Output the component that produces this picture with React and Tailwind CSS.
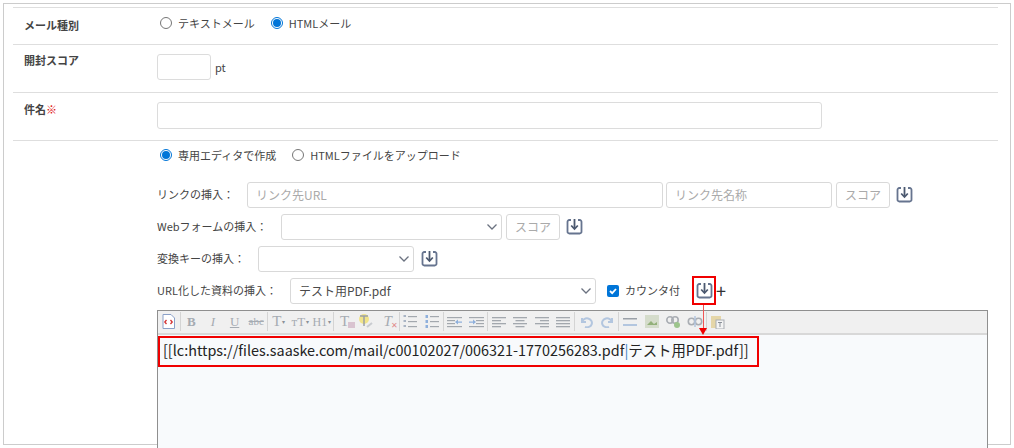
import React from 'react'

const font = { fontFamily: '"Noto Sans CJK JP", sans-serif' }

function InsertIcon() {
  return (
    <svg width="17" height="17" viewBox="0 0 17 17" fill="none" className="shrink-0">
      <path d="M5 2H3.500A1.800 1.800 0 0 0 1.500 4v9.500a1.800 1.800 0 0 0 2 2h10a1.800 1.800 0 0 0 2-2V4a1.800 1.800 0 0 0-2-2H12" stroke="#66748f" strokeWidth="1.800" />
      <path d="M8.500 1v9" stroke="#4b586f" strokeWidth="1.800" />
      <path d="M5.200 7.500l3.300 3.500 3.300-3.500" stroke="#4b586f" strokeWidth="1.800" />
    </svg>
  )
}

function Chevron() {
  return (
    <svg width="10" height="6" viewBox="0 0 10 6" fill="none" className="shrink-0">
      <path d="M.5 .5l4.500 4.500 4.500-4.500" stroke="#6b7280" strokeWidth="1.300" />
    </svg>
  )
}

function Radio({ checked, label }) {
  return (
    <label className="flex items-center gap-[6px]">
      {checked ? (
        <span className="flex h-[12px] w-[12px] items-center justify-center rounded-full border border-[#0075d8]">
          <span className="h-[8px] w-[8px] rounded-full bg-[#0075d8]" />
        </span>
      ) : (
        <span className="h-[12px] w-[12px] rounded-full border border-[#767676]" />
      )}
      <span>{label}</span>
    </label>
  )
}

function Select({ width, value }) {
  return (
    <div className={`flex h-[26px] items-center justify-between rounded-[3px] border border-[#d9d9d9] pl-2 pr-[4px] text-[12px] text-[#4a4a4a] ${width}`}>
      <span>{value}</span>
      <Chevron />
    </div>
  )
}

function ScoreButton() {
  return (
    <div className="flex h-[26px] w-[54px] items-center justify-center rounded-[3px] border border-[#d9d9d9] text-[12px] text-[#aaa]">
      スコア
    </div>
  )
}

function BulletList({ numbered }) {
  return (
    <svg width="14" height="13" viewBox="0 0 14 13">
      {[1, 6, 11].map((y) => (
        <g key={y}>
          <rect x="0.500" y={y - 1} width="2.500" height={numbered ? 3 : 2} fill={numbered ? '#8fb0dc' : '#a9b4c4'} />
          <rect x="5" y={y} width="9" height="1.200" fill="#a3a8ae" />
        </g>
      ))}
    </svg>
  )
}

function IndentIcon({ flip }) {
  return (
    <svg width="15" height="12" viewBox="0 0 15 12" style={flip ? { transform: 'scaleX(-1)' } : undefined}>
      {[1, 4, 7, 10].map((y) => (
        <rect key={y} x={y === 1 || y === 10 ? 0 : 7} y={y} width={y === 1 || y === 10 ? 15 : 8} height="1.200" fill="#a3a8ae" />
      ))}
      <path d="M0 5.500h4V3.500l3 2.500-3 2.500V6.800H0z" fill="#8fb0dc" />
    </svg>
  )
}

function AlignIcon({ align }) {
  const widths = [14, 9, 14, 9]
  return (
    <svg width="14" height="12" viewBox="0 0 14 12">
      {widths.map((w, i) => {
        const x = align === 'center' ? (14 - w) / 2 : align === 'right' ? 14 - w : 0
        return <rect key={i} x={align === 'justify' ? 0 : x} y={1 + i * 3} width={align === 'justify' ? 14 : w} height="1.300" fill="#a3a8ae" />
      })}
    </svg>
  )
}

const letter = 'font-["Liberation_Serif",serif] text-[#a5abb2]'
const caret = <span className="ml-[1px] text-[6px] text-[#8a9098]">▾</span>

const toolbar = [
  [<svg width="13" height="15" viewBox="0 0 13 15"><path d="M1 .5h8l3.500 3.500V14.500H1z" fill="#fff" stroke="#8aa0c8" /><path d="M4.500 6L2.800 8l1.700 2M8.500 6l1.700 2-1.700 2" stroke="#d43030" strokeWidth="1.300" fill="none" /></svg>],
  [
    <span className={`${letter} text-[13px] font-bold`}>B</span>,
    <span className={`${letter} text-[13px] italic`}>I</span>,
    <span className={`${letter} text-[13px] underline`}>U</span>,
    <span className={`${letter} text-[11px] line-through`}>abc</span>,
  ],
  [
    <span className={`${letter} flex items-center text-[15px]`}>T{caret}</span>,
    <span className={`${letter} flex items-center text-[13px]`}>тT{caret}</span>,
    <span className={`${letter} flex items-center text-[12px]`}>H1{caret}</span>,
  ],
  [
    <span className={`${letter} relative text-[15px]`}>T<span className="absolute bottom-[1px] left-[8px] h-[6px] w-[7px] bg-[#d9c3d0]" /></span>,
    <svg width="16" height="15" viewBox="0 0 16 15"><circle cx="6" cy="5" r="5" fill="#f1e48a" /><path d="M2 2h8M6 2v10" stroke="#9aa0a8" strokeWidth="1.500" /><path d="M9 13l5-4" stroke="#c9ccd0" strokeWidth="2" /></svg>,
    <span className={`${letter} relative text-[15px] italic`}>T<span className="absolute bottom-[-1px] left-[7px] text-[8px] not-italic text-[#e08a8a]">✕</span></span>,
  ],
  [<BulletList />, <BulletList numbered />],
  [<IndentIcon flip />, <IndentIcon />],
  [<AlignIcon align="left" />, <AlignIcon align="center" />, <AlignIcon align="right" />, <AlignIcon align="justify" />],
  [
    <svg width="14" height="12" viewBox="0 0 14 12" fill="none"><path d="M3 2v4h4M3 6a5 4.500 0 1 1 3 5" stroke="#b3c6df" strokeWidth="2" /></svg>,
    <svg width="14" height="12" viewBox="0 0 14 12" fill="none"><path d="M11 2v4H7M11 6a5 4.500 0 1 0-3 5" stroke="#b3c6df" strokeWidth="2" /></svg>,
  ],
  [
    <svg width="14" height="10" viewBox="0 0 14 10"><rect y="1" width="14" height="1.500" fill="#9aa0a8" /><rect y="7" width="14" height="2" fill="#b3c6df" /></svg>,
    <svg width="14" height="13" viewBox="0 0 14 13"><rect width="14" height="13" fill="#d5dccb" /><path d="M2 10l4-4 3 3 3-2v3z" fill="#93b07a" /></svg>,
    <svg width="16" height="13" viewBox="0 0 16 13" fill="none"><circle cx="5" cy="5" r="3.200" stroke="#a9adb3" strokeWidth="1.600" /><circle cx="10" cy="5" r="3.200" stroke="#a9adb3" strokeWidth="1.600" /><circle cx="12" cy="10" r="3" fill="#9cc48c" /></svg>,
    <svg width="16" height="13" viewBox="0 0 16 13" fill="none"><circle cx="4.500" cy="6.500" r="3.200" stroke="#a9adb3" strokeWidth="1.600" /><circle cx="11.500" cy="6.500" r="3.200" stroke="#a9adb3" strokeWidth="1.600" /><path d="M8 1v11" stroke="#b3c6df" strokeWidth="1.500" /></svg>,
  ],
  [
    <svg width="15" height="15" viewBox="0 0 15 15"><rect x="1" y="2" width="10" height="12" fill="#e5d6a8" /><rect x="6" y="6" width="8" height="9" fill="#f4f4f4" stroke="#a9adb3" /><path d="M8 8.500h4M10 8.500v4.500" stroke="#8a9098" /></svg>,
  ],
]

function Toolbar() {
  return (
    <div className="flex h-[24px] items-center border-b-2 border-[#d8d8d8] bg-[#f0f0f0]">
      {toolbar.map((group, i) => (
        <div key={i} className={`flex h-[19px] items-center ${i < toolbar.length - 1 ? 'border-r border-[#d4d4d4]' : ''}`}>
          {group.map((icon, j) => (
            <span key={j} className="flex h-[19px] w-[21.600px] items-center justify-center leading-none">
              {icon}
            </span>
          ))}
        </div>
      ))}
    </div>
  )
}

export default function App() {
  return (
    <div style={font} className="h-[448px] w-[1014px] overflow-hidden bg-white pl-[3px] pt-[3px] text-[11px] text-[#444]">
      <div className="relative h-[442px] w-[1008px] border border-[#cccccc] pl-[9px] pt-[3px]">
        <div className="w-[985px] border-t border-[#dedede]">
          <div className="flex h-[37px] border-b border-[#dedede] pl-[11px]">
            <div className="w-[133px] pt-[9px] font-bold">メール種別</div>
            <div className="flex items-start gap-[16px] pl-[3px] pt-[7px]">
              <Radio label="テキストメール" />
              <Radio checked label="HTMLメール" />
            </div>
          </div>
          <div className="flex h-[48px] border-b border-[#dedede] pl-[11px]">
            <div className="w-[133px] pt-[7px] font-bold">開封スコア</div>
            <div className="flex items-center gap-[4px] pb-[3px]">
              <div className="h-[26px] w-[54px] rounded-[3px] border border-[#dcdcdc]" />
              <span>pt</span>
            </div>
          </div>
          <div className="flex h-[48px] border-b border-[#dedede] pl-[11px]">
            <div className="w-[133px] pt-[8px] font-bold">
              件名<span className="text-[#e01010]">※</span>
            </div>
            <div className="pt-[9px]">
              <div className="h-[27px] w-[665px] rounded-[3px] border border-[#dcdcdc]" />
            </div>
          </div>
          <div className="pl-[144px]">
            <div className="flex gap-[16px] pl-[3px] pt-[6px]">
              <Radio checked label="専用エディタで作成" />
              <Radio label="HTMLファイルをアップロード" />
            </div>
            <div className="mt-[18px] flex flex-col gap-[6px]">
              <div className="flex items-center">
                <span className="w-[90px]">リンクの挿入：</span>
                <div className="flex h-[26px] w-[416px] items-center rounded-[3px] border border-[#d9d9d9] pl-2 text-[12px] text-[#aaa]">リンク先URL</div>
                <div className="ml-[3px] flex h-[26px] w-[166px] items-center rounded-[3px] border border-[#d9d9d9] pl-2 text-[12px] text-[#aaa]">リンク先名称</div>
                <div className="ml-[4px] mr-[6px]"><ScoreButton /></div>
                <InsertIcon />
              </div>
              <div className="flex items-center">
                <span className="w-[124px]">Webフォームの挿入：</span>
                <Select width="w-[221px]" />
                <div className="ml-[4px] mr-[6px]"><ScoreButton /></div>
                <InsertIcon />
              </div>
              <div className="flex items-center">
                <span className="w-[101px]">変換キーの挿入：</span>
                <Select width="w-[156px]" />
                <div className="ml-[7px]"><InsertIcon /></div>
              </div>
              <div className="flex items-center">
                <span className="w-[133px]">URL化した資料の挿入：</span>
                <Select width="w-[306px]" value="テスト用PDF.pdf" />
                <span className="ml-[11px] flex h-[12px] w-[12px] items-center justify-center rounded-[2px] bg-[#0075d8]">
                  <svg width="10" height="10" viewBox="0 0 10 10" fill="none"><path d="M2 5l2.200 2.200L8 3" stroke="#fff" strokeWidth="1.800" /></svg>
                </span>
                <span className="ml-[6px] w-[71px]">カウンタ付</span>
                <InsertIcon />
                <span className="ml-[3px] pb-[1px] text-[18px] leading-none text-[#333]">+</span>
              </div>
            </div>
            <div className="mt-[6px] h-[140px] w-[831px] border border-b-0 border-[#8f8f8f] bg-[#f8fafc]">
              <Toolbar />
              <div className="whitespace-nowrap pl-[5px] pt-[2px] text-[14.400px] leading-[26px] text-[#222]">
                [[lc:https://files.saaske.com/mail/c00102027/006321-1770256283.pdf<span className="text-[#3b82c4]">|</span>テスト用PDF.pdf]]
              </div>
            </div>
          </div>
        </div>

        {/* 赤枠の注釈 */}
        <div className="absolute left-[688px] top-[272px] h-[29px] w-[24px] border-2 border-[#f00000]" />
        <div className="absolute left-[699px] top-[301px] h-[24px] w-px bg-[#f05555]" />
        <div className="absolute left-[695px] top-[324px] h-0 w-0 border-x-[4.500px] border-t-[7px] border-x-transparent border-t-[#f00000]" />
        <div className="absolute left-[154px] top-[332px] h-[31px] w-[601px] border-2 border-[#f00000]" />
      </div>
    </div>
  )
}
